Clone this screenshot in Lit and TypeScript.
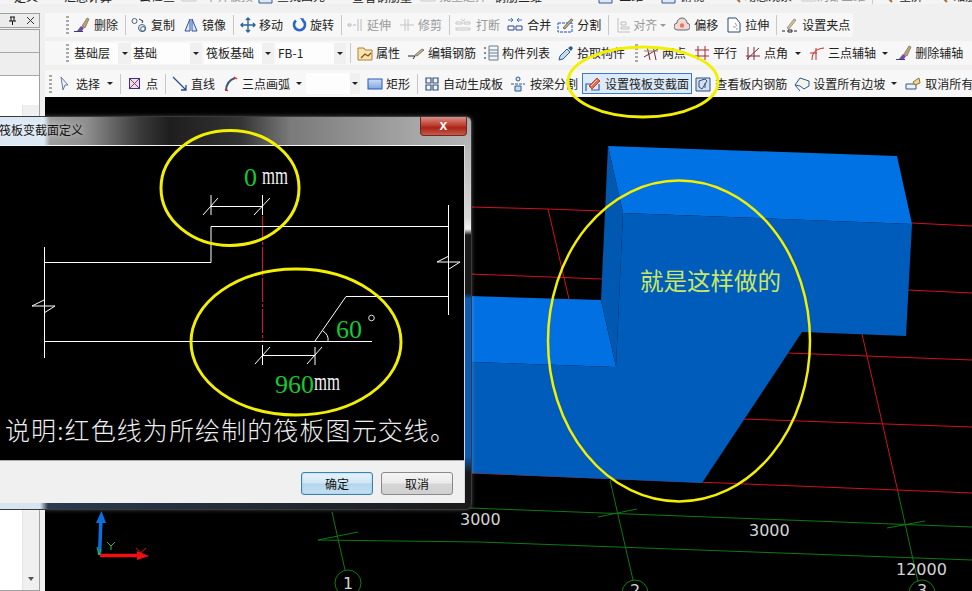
import { LitElement, html, css, svg } from "lit";
import { customElement } from "lit/decorators.js";

type Item = {
  k?: "sep" | "grip" | "combo";
  l?: string; // label
  i?: string; // icon name
  slot?: number; // icon slot width
  d?: number; // nudge from the default gap
  arrow?: number; // dropdown arrow offset
  off?: boolean; // greyed out
  w?: number; // combo width
  aw?: number; // combo arrow part
  on?: boolean; // pressed state
};

const icons: Record<string, unknown> = {
  brush: svg`<path d="M0 14.5h9" stroke="#33407a"/><path d="M3 14l4-5 3 2-2 3z" fill="#7a4aa0"/><path d="M8 9l5-8 2 1-4 9z" fill="#b9a47c" stroke="#6b5a3a" stroke-width=".6"/>`,
  copy: svg`<circle cx="3.5" cy="4" r="2.5" stroke="#44608a"/><circle cx="11" cy="11" r="3.5" stroke="#44608a"/><circle cx="12" cy="12" r="2.4" stroke="#44608a"/><path d="M8 2l4 2-1 2" stroke="#333"/>`,
  mirror: svg`<path d="M7 2L2 14h5zM9 2l5 12H9z" fill="#dfe8f8" stroke="#2a50a8"/>`,
  move: svg`<path d="M8 1v14M1 8h14M6 3l2-2 2 2M6 13l2 2 2-2M3 6L1 8l2 2M13 6l2 2-2 2" stroke="#2c6496" stroke-width="1.4"/>`,
  rotate: svg`<path d="M4 3.5a5.5 5.5 0 1 0 7 0" stroke="#2a62c8" stroke-width="2.6"/><path d="M8 1l4 .5-1 4z" fill="#2a62c8"/>`,
  extend: svg`<path d="M1 7h3v2H1zM6 8h3M11 2v12M14 2v12" stroke="#bbb"/>`,
  trim: svg`<path d="M1 8h14M6 2v12M9 2v12" stroke="#c4c4c4"/>`,
  breaks: svg`<path d="M1 5h6v2H1zM9 5h6v2H9zM1 11h14v2H1z" stroke="#c8c8c8"/><path d="M6 2l2 2 2-2" stroke="#c8c8c8"/>`,
  merge: svg`<path d="M1 9h6v4H1zM9 9h6v4H9z" stroke="#2c4a8c"/><path d="M1 3h5M4 1l2 2-2 2M15 3h-5M12 1l-2 2 2 2" stroke="#3a78b8"/>`,
  split: svg`<path d="M1 6h14v9H1z" stroke="#1a50c8" stroke-dasharray="3 1"/><path d="M6 11l8-9 2 1-8 9z" fill="#c4b07c" stroke="#444" stroke-width=".7"/>`,
  align: svg`<path d="M2 1v14h12M5 5h5v3H5zM5 10h8v2H5z" stroke="#c0c0c0"/>`,
  offset: svg`<path d="M4 13a3.5 3.5 0 0 1-1-7 5 5 0 0 1 10 0 3.5 3.5 0 0 1-1 7z" fill="#f4d8d0" stroke="#5a6a80"/><circle cx="8" cy="8.500" r="2.200" fill="#e07a70"/>`,
  stretch: svg`<path d="M2 1h8l4 5v9H2z" fill="#fff" stroke="#2c4a70"/><path d="M9 6l2 3M7 10h3M10 12h2" stroke="#999"/>`,
  grippt: svg`<path d="M0 14h3M6 13h4v2H6zM12 14h3" stroke="#222"/><path d="M5 11l7-9 2 1-7 9z" fill="#d8c48c" stroke="#777" stroke-width=".7"/>`,
  prop: svg`<path d="M1 3h6l1 2h7v10H1z" fill="#f8e4b0" stroke="#b08030"/><path d="M4 13l4-4 3 2 3-3" stroke="#805010" stroke-width="1.2"/>`,
  pen: svg`<path d="M0 11h7l-2 3" stroke="#222"/><path d="M7 10l7-6 2 1-7 6z" fill="#c8b488" stroke="#555" stroke-width=".7"/>`,
  list: svg`<path d="M1 2h2v2H1zM1 7h2v2H1zM1 12h2v2H1z" fill="#889"/><path d="M6 1h9v14H6zM6 5h9M6 8h9M6 11h9" fill="#f2f6fa" stroke="#6a7a8c"/>`,
  dropper: svg`<path d="M1 15l1-4 7-7 3 3-7 7z" fill="#c8dcf0" stroke="#2a5a90"/><path d="M10 3l3-2 2 2-2 3z" fill="#2a5a90"/>`,
  twopt: svg`<path d="M1 12L15 4M4 1l3 14M10 1l3 14" stroke="#6a3030"/><path d="M1 6h14" stroke="#888"/>`,
  parallel: svg`<path d="M4 1v14M11 1v14M1 5h14M1 11h14" stroke="#a82830"/>`,
  ptangle: svg`<path d="M3 2v13M9 2v13M1 11h14M2 14L14 3" stroke="#7a2a3a"/>`,
  arc3: svg`<path d="M3 15c0-8 4-11 12-12M7 3v12M1 8h7" stroke="#c82828"/>`,
  select: svg`<path d="M1 1l7 8H5l-2 5z" fill="#eef2fa" stroke="#6a7a9c"/>`,
  point: svg`<rect x=".5" y="2.500" width="10" height="10" fill="#e8e0f0" stroke="#33347a"/><path d="M1 3l9 9M10 3l-9 9" stroke="#c02860"/>`,
  line: svg`<path d="M1 1l13 13M14 9v5H9" stroke="#2a5088" stroke-width="1.3"/>`,
  arc: svg`<path d="M3 15C3 8 6 4 12 2" stroke="#3a5a7a" stroke-width="2"/><path d="M2 13l3 2M11 1l3 2" stroke="#d83020" stroke-width="1.500"/>`,
  rect: svg`<defs><linearGradient id="rg" x1="0" y1="0" x2="0" y2="1"><stop offset="0" stop-color="#cfe0f8"/><stop offset="1" stop-color="#7fa4e0"/></linearGradient></defs><rect x="1" y="3" width="14" height="10" fill="url(#rg)" stroke="#2a5ab0"/>`,
  auto: svg`<path d="M2 2h5v5H2zM9 2h5v5H9zM2 9h5v5H2zM9 9h5v5H9z" fill="#f0f4f8" stroke="#37507a" stroke-width="1.2"/>`,
  beam: svg`<circle cx="8" cy="3" r="2" fill="#e0ecf8" stroke="#2a5a90"/><path d="M1 8h14" stroke="#2a5a90" stroke-dasharray="3 1"/><path d="M5 10h6v5H5z" fill="#c8dcf0" stroke="#2a5a90"/>`,
  section: svg`<path d="M1 15V8h5M14 8v6H6" stroke="#2a5ab0" stroke-width="1.200"/><path d="M4 10l8-8 3 3-8 8z" fill="#ec6a4a" stroke="#b03020" stroke-width=".8"/><path d="M6 10l6-6" stroke="#fff" stroke-width=".8"/>`,
  rebar: svg`<path d="M1 2h14v13H1z" fill="#cfe0f4" stroke="#33507a"/><path d="M4 5l6-2 2 2-5 8-3-2zM10 7v5" stroke="#33507a"/>`,
  slope: svg`<path d="M1 9l5-7 9 3v5l-5 3-4-3z" fill="#f4f4e8" stroke="#2a5a90"/><path d="M1 9l5 6" stroke="#2a5a90"/>`,
  unslope: svg`<path d="M1 8h10v5H1z" fill="#f0f0f0" stroke="#2a5a90"/><path d="M8 6l6-4 1 5-5 2z" fill="#f0d890" stroke="#907030"/>`,
  cloud: svg`<path d="M1 3h13v9H1z" fill="#3a78d0"/><path d="M3 5h9v3H3z" fill="#cde"/>`,
  page: svg`<path d="M2 1h10l3 3v11H2z" fill="#dce8f6" stroke="#3a5a8a"/>`,
  find: svg`<circle cx="6" cy="6" r="4" fill="#eef" stroke="#456"/><path d="M9 9l5 5" stroke="#a87030" stroke-width="2"/>`,
};

const top: Item[] = [
  { l: "定义", d: 7 },
  { l: "汇总计算", d: 18 },
  { l: "云检查", i: "cloud", slot: 19 },
  { l: "平齐板顶", i: "breaks", slot: 24, d: -2, off: true },
  { l: "查找图元", i: "page", d: -4 },
  { l: "查看钢筋量", d: 19 },
  { l: "批量选择", i: "breaks", slot: 19, off: true },
  { l: "钢筋三维", d: -1 },
  { l: "二维", i: "page", slot: 22, d: 47 },
  { l: "俯视", i: "page", d: 9 },
  { l: "动态观察", i: "find", slot: 18, d: 14 },
  { l: "局部三维", i: "breaks", slot: 16, d: 1, off: true },
  { k: "sep" },
  { l: "全屏", i: "find", slot: 21 },
  { l: "缩放", i: "find", d: 2 },
];

const row1: Item[] = [
  { k: "grip" },
  { l: "删除", i: "brush" },
  { k: "sep" },
  { l: "复制", i: "copy" },
  { l: "镜像", i: "mirror", slot: 19 },
  { k: "sep" },
  { l: "移动", i: "move", slot: 19, d: 1 },
  { l: "旋转", i: "rotate", slot: 18, d: 1 },
  { k: "sep" },
  { l: "延伸", i: "extend", off: true },
  { l: "修剪", i: "trim", slot: 19, off: true },
  { k: "sep" },
  { l: "打断", i: "breaks", slot: 21, off: true },
  { l: "合并", i: "merge", d: -1 },
  { l: "分割", i: "split", d: -2 },
  { k: "sep" },
  { l: "对齐", i: "align", slot: 17, d: 2, off: true, arrow: 3 },
  { l: "偏移", i: "offset" },
  { l: "拉伸", i: "stretch", slot: 19 },
  { k: "sep" },
  { l: "设置夹点", i: "grippt" },
];

const row2: Item[] = [
  { k: "grip" },
  { k: "combo", l: "基础层", w: 59, aw: 13, d: -2 },
  { k: "combo", l: "基础", w: 71, aw: 12, d: -8 },
  { k: "combo", l: "筏板基础", w: 70, aw: 12, d: -6 },
  { k: "combo", l: "FB-1", w: 70, aw: 12, d: -6 },
  { k: "sep", d: -3 },
  { l: "属性", i: "prop", slot: 19, d: 1 },
  { l: "编辑钢筋", i: "pen" },
  { l: "构件列表", i: "list", slot: 19, d: -1 },
  { l: "拾取构件", i: "dropper", slot: 19 },
  { k: "grip", d: 2 },
  { l: "两点", i: "twopt", slot: 19 },
  { l: "平行", i: "parallel", slot: 19 },
  { l: "点角", i: "ptangle", slot: 19, arrow: 7 },
  { l: "三点辅轴", i: "arc3", slot: 19, arrow: 6 },
  { l: "删除辅轴", i: "brush", slot: 19 },
];

const row3: Item[] = [
  { k: "grip" },
  { l: "选择", i: "select", slot: 16, d: 3, arrow: 7 },
  { k: "sep" },
  { l: "点", i: "point", slot: 17, d: 3 },
  { k: "sep" },
  { l: "直线", i: "line", slot: 19, d: 1 },
  { l: "三点画弧", i: "arc", slot: 19, arrow: 6 },
  { k: "combo", l: "", w: 54, aw: 10, d: -4 },
  { l: "矩形", i: "rect", slot: 19, d: -1 },
  { k: "sep" },
  { l: "自动生成板", i: "auto", slot: 19, d: 1 },
  { l: "按梁分割", i: "beam", d: -1 },
  { l: "设置筏板变截面", i: "section", d: -4, on: true },
  { l: "查看板内钢筋", i: "rebar", d: -5 },
  { l: "设置所有边坡", i: "slope", slot: 19, d: -1, arrow: 6 },
  { l: "取消所有边坡", i: "unslope" },
];

@customElement("app-root")
export class AppRoot extends LitElement {
  static styles = css`
    :host {
      display: block;
      position: relative;
      width: 972px;
      height: 591px;
      overflow: hidden;
      background: #f0f0f0;
      font: 12px/14px "Noto Sans CJK SC", "Liberation Sans", sans-serif;
      color: #222;
    }
    .top {
      display: flex;
      align-items: flex-end;
      gap: 8px;
      height: 4px;
      padding-left: 7px;
      overflow: hidden;
      background: #f4f4f4;
    }
    .main {
      display: flex;
      height: 587px;
    }
    .panel {
      flex: none;
      width: 40px;
      margin-right: 5px;
      padding-top: 9px;
      box-sizing: border-box;
      display: flex;
      flex-direction: column;
    }
    .phead {
      height: 13px;
      border: 1px solid #a0a0a0;
      border-left: 0;
      display: flex;
      align-items: center;
      justify-content: flex-end;
      gap: 9px;
      padding-right: 4px;
      background: #ececec;
    }
    .phead svg {
      width: 9px;
      height: 9px;
    }
    .pbody {
      flex: 1;
      margin-top: 1px;
      border: 1px solid #a0a0a0;
      border-left: 0;
      display: flex;
      flex-direction: column;
    }
    .prow {
      height: 22px;
      border-bottom: 1px solid #a8a8a8;
      background: #eeeeee;
    }
    .plist {
      flex: 1;
      background: #fff;
      display: flex;
      justify-content: flex-end;
    }
    .pscroll {
      width: 16px;
      background: #f0f0f0;
      margin-top: 29px;
      border-left: 1px solid #e4e4e4;
      display: flex;
      flex-direction: column;
      justify-content: flex-end;
      align-items: center;
      padding-bottom: 9px;
    }
    .pscroll i {
      border: 3px solid transparent;
      border-top: 4px solid #555;
      border-bottom: 0;
    }
    .work {
      flex: 1;
      min-width: 0;
      display: flex;
      flex-direction: column;
      padding-top: 9px;
    }
    .bar {
      display: flex;
      align-items: center;
      gap: 8px;
      height: 24px;
      width: fit-content;
      background: #f7f7f7;
      padding: 0 3px 0 21px;
      white-space: nowrap;
      flex: none;
      margin-bottom: 4px;
    }
    .bar.wide {
      width: auto;
    }
    .bar.r3 {
      height: 27px;
      width: auto;
      padding-left: 4px;
      margin: 1px 0 0;
      overflow: hidden;
    }
    .btn {
      display: flex;
      align-items: center;
      flex: none;
    }
    .btn.off {
      color: #9a9a9a;
    }
    .btn.on {
      height: 21px;
      padding: 0 2px 0 3px;
      box-sizing: border-box;
      border: 1px solid #3d7bc8;
      background: #dcebfa;
    }
    .btn.on .slot {
      margin-left: -1px;
    }
    .slot {
      flex: none;
    }
    .ico {
      display: block;
      width: 16px;
      height: 16px;
      stroke-width: 1;
    }
    .arrow {
      flex: none;
      border: 3px solid transparent;
      border-top: 3px solid #222;
      border-bottom: 0;
    }
    .off .arrow {
      border-top-color: #999;
    }
    .sep {
      flex: none;
      width: 1px;
      height: 20px;
      background: #c8c8c8;
      margin: 0 -3px 0 -1px;
    }
    .grip {
      flex: none;
      width: 3px;
      height: 18px;
      margin-right: -3px;
      background: repeating-linear-gradient(#a8a8a8 0 2px, transparent 2px 4px);
    }
    .combo {
      flex: none;
      display: flex;
      align-items: center;
      height: 21px;
    }
    .combo b {
      flex: 1;
      align-self: stretch;
      display: flex;
      align-items: center;
      font-weight: 400;
      padding-left: 2px;
      background: #fdfdfd;
    }
    .combo span {
      flex: none;
      align-self: stretch;
      display: flex;
      align-items: center;
      justify-content: center;
      background: #f0f0f0;
    }
    .view {
      flex: 1;
      background: #000;
      min-height: 0;
    }
    .view svg {
      display: block;
      width: 927px;
      height: 494px;
    }
    .scene-num {
      font: 16px "DejaVu Sans", sans-serif;
      fill: #d4d4d4;
    }
    .scene-note {
      font: 23.5px "Noto Sans CJK SC", sans-serif;
      fill: #c8e864;
    }
    .dialog {
      position: absolute;
      left: 0;
      top: 116px;
      width: 472px;
      height: 394px;
      display: flex;
      flex-direction: column;
      box-sizing: border-box;
      padding: 0 6px 6px 0;
      border-radius: 0 6px 6px 0;
      border: 1px solid #3a3a3a;
      border-left: 0;
      background:
        linear-gradient(90deg, #dbe8f4 0 44px, transparent 50px) 0 0 / 100% 28px no-repeat,
        linear-gradient(90deg, #d8e4f0 0 40px, #2a3a50 48px, #1a1a1a 100%) 0 100% / 100% 6px no-repeat,
        linear-gradient(#a8a8a8 0, #d8d8d8 100px, #f4f4f4 112px, #1a1a1a 118px, #1a1a1a 176px, #0a5cb8 182px, #0a5cb8 340px, #181818 356px) 100% 0 / 6px 100% no-repeat,
        linear-gradient(90deg, #a0a0a0 44px, #8e8e8e 87px, #3a3a3a 140px, #1e1e1e 170px, #333 240px, #7a7a7a 290px, #a8a8a8 420px, #b4b4b4 100%) 0 0 / 100% 28px no-repeat;
      box-shadow: 0 0 4px rgba(255, 255, 255, 0.25);
    }
    .dtitle {
      flex: none;
      height: 28px;
      display: flex;
      align-items: center;
      justify-content: space-between;
      padding: 0 0 2px 0;
      box-sizing: border-box;
    }
    .dtitle em {
      font-style: normal;
      color: #111;
      margin-left: -1px;
      text-shadow: 0 0 6px rgba(255, 255, 255, 0.8);
    }
    .dclose {
      align-self: flex-start;
      width: 47px;
      height: 19px;
      margin-right: -2px;
      box-sizing: border-box;
      border: 1px solid #6a2a2a;
      border-top: 0;
      border-radius: 0 0 4px 4px;
      background: linear-gradient(#d89088, #c04030 45%, #a82418 60%, #c85a48);
      color: #fff;
      font: 700 14px/16px "Liberation Sans", sans-serif;
      text-align: center;
    }
    .dclient {
      flex: 1;
      min-height: 0;
      display: flex;
      flex-direction: column;
      border-top: 1px solid #f4f4f4;
      border-right: 1px solid #d8d8d8;
    }
    .dblack {
      flex: none;
      height: 314px;
      background: #000;
      border-bottom: 1px solid #b0b0b0;
      display: flex;
      flex-direction: column;
    }
    .dblack svg {
      display: block;
      width: 464px;
      height: 264px;
      flex: none;
    }
    .dnum {
      font: 26px "Liberation Serif", serif;
      fill: #16c832;
    }
    .dmm {
      font: 26px "Liberation Serif", serif;
      fill: #f0f0f0;
    }
    .dnote {
      flex: 1;
      padding: 0 0 12px 5px;
      display: flex;
      align-items: center;
      font-size: 25px;
      line-height: 30px;
      font-weight: 300;
      letter-spacing: 1.1px;
      color: #eeeeee;
      white-space: nowrap;
    }
    .dfoot {
      flex: 1;
      background: #f0f0f0;
      display: flex;
      justify-content: flex-end;
      align-items: flex-start;
      gap: 8px;
      padding: 11px 11px 0 0;
    }
    .dbtn {
      width: 72px;
      height: 23px;
      box-sizing: border-box;
      border: 1px solid #8a8a8a;
      border-radius: 3px;
      background: linear-gradient(#f4f4f4, #ebebeb 48%, #d6d6d6 52%, #cfcfcf);
      text-align: center;
      line-height: 21px;
      color: #111;
    }
    .dbtn.def {
      border: 1px solid #3c7fb1;
      box-shadow: inset 0 0 2px #7ec4ea;
      background: linear-gradient(#e8f4fb, #cfe6f4 48%, #b4d6ec 52%, #c4e0f2);
    }
    .marks {
      position: absolute;
      left: 0;
      top: 0;
      width: 972px;
      height: 591px;
      pointer-events: none;
    }
  `;

  private icon(name?: string) {
    return html`<svg class="ico" viewBox="0 0 16 16" fill="none">${icons[name ?? ""]}</svg>`;
  }

  private item(it: Item) {
    const nudge = it.d ? `margin-left:${it.d}px` : "";
    if (it.k === "sep") return html`<div class="sep" style=${it.d ? `margin-left:${it.d - 1}px` : ""}></div>`;
    if (it.k === "grip") return html`<div class="grip" style=${nudge}></div>`;
    if (it.k === "combo")
      return html`<div class="combo" style="width:${it.w}px;${nudge}">
        <b>${it.l}</b><span style="width:${it.aw}px"><i class="arrow"></i></span>
      </div>`;
    return html`<div class="btn ${it.off ? "off" : ""} ${it.on ? "on" : ""}" style=${nudge}>
      ${it.i
        ? html`<div class="slot" style="width:${it.slot ?? 20}px">${this.icon(it.i)}</div>`
        : ""}
      <span>${it.l}</span>
      ${it.arrow ? html`<i class="arrow" style="margin-left:${it.arrow}px"></i>` : ""}
    </div>`;
  }

  private scene() {
    return svg`
      <g fill="none" stroke="#d01020" stroke-width="1">
        <path d="M470 207L548 209 602 211M470 274L602 279M548 209L569 299"/>
        <path d="M912 223L972 226M908 290L972 293M788 353L972 360M743 419L972 427"/>
        <path d="M470 473L972 493M862 334L898 492"/>
      </g>
      <path d="M470 296L601 300 616 367 470 362z" fill="#0070e2"/>
      <path d="M608 146L897 156 912 224 623 213z" fill="#0072e4"/>
      <path d="M623 213L912 224 906 336 802 332 702 483 470 473 470 362 616 367z" fill="#005cba"/>
      <path d="M608 146L623 213 616 367 601 300z" fill="#0058b0"/>
      <g fill="none" stroke="#0c7a14" stroke-width="1">
        <path d="M470 508L972 527M318 540L480 542 972 560"/>
        <path d="M318 540L358 532M598 517L637 509M887 528L925 521"/>
        <path d="M332 512L345 570M610 480L633 580M898 492L918 582"/>
        <circle cx="348" cy="583" r="13"/>
        <circle cx="635" cy="593" r="13"/>
        <circle cx="922" cy="593" r="13"/>
      </g>
      <text class="scene-num" x="460" y="525">3000</text>
      <text class="scene-num" x="749" y="536">3000</text>
      <text class="scene-num" x="896" y="575">12000</text>
      <text class="scene-num" x="343" y="589">1</text>
      <text class="scene-num" x="630" y="596">2</text>
      <text class="scene-num" x="917" y="596">3</text>
      <text class="scene-note" x="640" y="290">就是这样做的</text>
      <path d="M99.5 555L101 519" stroke="#0a70e0" stroke-width="3.5"/>
      <path d="M96 523L101.5 511 106 523z" fill="#0a70e0"/>
      <path d="M100 555.5H138" stroke="#f01010" stroke-width="3.5"/>
      <path d="M137 551L149 556 137 560z" fill="#f01010"/>
      <path d="M107 542l4 4 4-4M111 546v4" fill="none" stroke="#20c040"/>
      <path d="M136 548l10 9M146 548l-10 9" stroke="#c81010"/>
      <path d="M97 547l2 8 2-6" fill="none" stroke="#20c040"/>
    `;
  }

  private diagram() {
    return svg`
      <path d="M262.5 216V341" stroke="#e01030" stroke-dasharray="24 2 3 2" fill="none"/>
      <g fill="none" stroke="#fff" stroke-width="1">
        <path d="M211 206.5H262M211 195V215M262.5 195V215M203 215L218 198M254 215L270 198"/>
        <path d="M448 226.5H211V262.5H44.5M44.5 247V358M44 341.5H372M448.5 205V315"/>
        <path d="M448 296.5H346L315 341M323 331Q329 335 328 341"/>
        <path d="M32 306L44 300M32 306H55L44 313M437 262L449 256M437 262H460L449 269"/>
        <path d="M262 355.5H315M262.5 345V365M315 347V365M255 364L270 347M307 364L322 347"/>
        <circle cx="371.5" cy="318" r="2.8" stroke="#ddd"/>
      </g>
      <text class="dnum" x="244" y="186">0</text>
      <text class="dmm" x="262" y="184" textLength="26" lengthAdjust="spacingAndGlyphs">mm</text>
      <text class="dnum" x="336" y="338">60</text>
      <text class="dnum" x="275" y="393">960</text>
      <text class="dmm" x="314" y="390" textLength="26" lengthAdjust="spacingAndGlyphs">mm</text>
    `;
  }

  render() {
    return html`
      <div class="top">${top.map((t) => this.item(t))}</div>
      <div class="main">
        <div class="panel">
          <div class="phead">
            <svg viewBox="0 0 9 9"><path d="M2 1h5M3 1v4M6 1v4M1 5h7M4.5 5v4" stroke="#111" fill="none" /></svg>
            <svg viewBox="0 0 9 9"><path d="M1 1l7 7M8 1L1 8" stroke="#333" fill="none" /></svg>
          </div>
          <div class="pbody">
            <div class="prow"></div>
            <div class="prow"></div>
            <div class="plist"><div class="pscroll"><i></i></div></div>
          </div>
        </div>
        <div class="work">
          <div class="bar">${row1.map((t) => this.item(t))}</div>
          <div class="bar wide">${row2.map((t) => this.item(t))}</div>
          <div class="bar r3">${row3.map((t) => this.item(t))}</div>
          <div class="view">
            <svg viewBox="45 97 927 494">${this.scene()}</svg>
          </div>
        </div>
      </div>
      <div class="dialog">
        <div class="dtitle"><em>筏板变截面定义</em><div class="dclose">x</div></div>
        <div class="dclient">
          <div class="dblack">
            <svg viewBox="0 146 464 264">${this.diagram()}</svg>
            <div class="dnote">说明:红色线为所绘制的筏板图元交线。</div>
          </div>
          <div class="dfoot">
            <div class="dbtn def">确定</div>
            <div class="dbtn">取消</div>
          </div>
        </div>
      </div>
      <svg class="marks" viewBox="0 0 972 591" fill="none" stroke="#f2f000">
        <ellipse cx="230" cy="188" rx="69" ry="57.5" stroke-width="3" />
        <ellipse cx="296" cy="342" rx="105" ry="73" stroke-width="3" />
        <ellipse cx="679" cy="341" rx="131" ry="160.5" stroke-width="2.5" />
        <ellipse cx="643" cy="82" rx="75" ry="35" stroke-width="3" />
      </svg>
    `;
  }
}
